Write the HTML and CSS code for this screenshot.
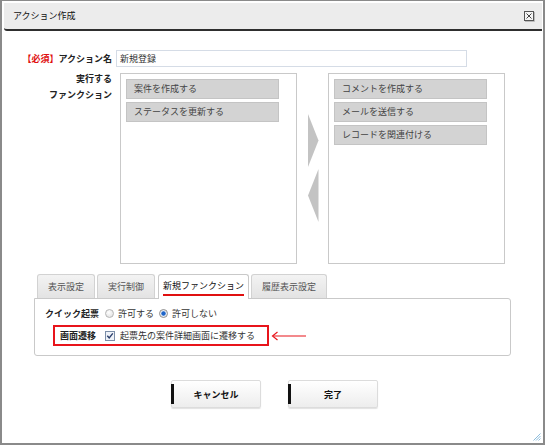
FILE: index.html
```html
<!DOCTYPE html>
<html lang="ja">
<head>
<meta charset="utf-8">
<title>アクション作成</title>
<link rel="stylesheet" href="styles.css">
</head>
<body>
<div class="win">
  <div class="header">
    <span class="title">アクション作成</span>
    <svg class="close" width="11" height="11" viewBox="0 0 11 11">
      <rect x="0.5" y="0.5" width="9" height="9" fill="#f4f4f4" stroke="#555"/>
      <path d="M2.5 2.5 L7.5 7.5 M7.5 2.5 L2.5 7.5" stroke="#444" stroke-width="1"/>
      <path d="M1 10.5 H10.5 V1" stroke="#bbb" fill="none"/>
    </svg>
  </div>
  <div class="main">
    <div class="row-name">
      <div class="label"><span class="req">【必須】</span>アクション名</div>
      <div class="input">新規登録</div>
    </div>
    <div class="row-func">
      <div class="label label-func">実行する<br>ファンクション</div>
      <div class="listbox">
        <div class="item">案件を作成する</div>
        <div class="item">ステータスを更新する</div>
      </div>
      <div class="arrows">
        <svg width="11" height="53" viewBox="0 0 11 53"><polygon points="0,0 10.5,26.5 0,53" fill="#c3c3c3"/></svg>
        <svg width="11" height="53" viewBox="0 0 11 53"><polygon points="10.5,0 0,26.5 10.5,53" fill="#c3c3c3"/></svg>
      </div>
      <div class="listbox">
        <div class="item">コメントを作成する</div>
        <div class="item">メールを送信する</div>
        <div class="item">レコードを関連付ける</div>
      </div>
    </div>
    <div class="tabs">
      <div class="tab">表示設定</div>
      <div class="tab">実行制御</div>
      <div class="tab tab-active"><span class="tab-mark">新規ファンクション</span></div>
      <div class="tab">履歴表示設定</div>
    </div>
    <div class="panel">
      <div class="opt-row">
        <span class="opt-label">クイック起票</span>
        <span class="radio"></span><span class="opt-text">許可する</span>
        <span class="radio radio-on"></span><span class="opt-text">許可しない</span>
      </div>
      <div class="hl-row">
        <div class="hl-box">
          <span class="opt-label">画面遷移</span>
          <svg class="check" width="10" height="10" viewBox="0 0 10 10">
            <rect x="0.5" y="0.5" width="9" height="9" fill="#eef2f8" stroke="#7b8ea8"/>
            <path d="M2.3 4.8 L4.2 7 L7.8 2.4" stroke="#2b3f6b" stroke-width="1.4" fill="none"/>
          </svg>
          <span class="hl-text">起票先の案件詳細画面に遷移する</span>
        </div>
        <svg class="pointer" width="36" height="10" viewBox="0 0 36 10">
          <path d="M2 5 H35" stroke="#e8141b" stroke-width="1.2"/>
          <path d="M6.5 1 L1.5 5 L6.5 9" stroke="#e8141b" stroke-width="1.2" fill="none"/>
        </svg>
      </div>
    </div>
    <div class="buttons">
      <div class="btn"><span class="btn-bar"></span><span class="btn-text">キャンセル</span></div>
      <div class="btn"><span class="btn-bar"></span><span class="btn-text">完了</span></div>
    </div>
  </div>
  <svg class="grip" width="8" height="8" viewBox="0 0 8 8">
    <path d="M7.5 0.5 L0.5 7.5 M7.5 3 L3 7.5 M7.5 5.5 L5.5 7.5" stroke="#7fb4d8" stroke-width="0.9"/>
  </svg>
</div>
</body>
</html>
```

FILE: styles.css
```css
html, body {
  margin: 0;
  padding: 0;
  background: #fff;
}
body {
  font-family: "Noto Sans CJK JP", "Noto Sans", sans-serif;
  font-size: 9px;
  color: #222;
}
.win {
  width: 545px;
  height: 445px;
  box-sizing: border-box;
  border: 2px solid #8a8a8a;
  border-top-width: 1px;
  background: #fff;
  display: flex;
  flex-direction: column;
  position: relative;
}
.header {
  margin: 2px 1px 0 2px;
  height: 26px;
  box-sizing: content-box;
  background: #ececec;
  border-bottom: 2px solid #2e2e2e;
  border-radius: 0 0 0 3px;
  display: flex;
  align-items: center;
  justify-content: space-between;
  padding: 0 7px 0 9px;
}
.title {
  font-size: 9px;
  color: #111;
  line-height: 12px;
}
.close {
  display: block;
}
.main {
  padding-top: 19px;
}
.row-name {
  display: flex;
  align-items: center;
}
.label {
  width: 110px;
  text-align: right;
  font-weight: bold;
  color: #222;
  line-height: 14px;
}
.req {
  color: #e01010;
}
.input {
  margin-left: 4px;
  width: 351px;
  height: 17px;
  box-sizing: border-box;
  border: 1px solid #d5dce6;
  padding-left: 3px;
  line-height: 15px;
  color: #333;
}
.row-func {
  display: flex;
  margin-top: 6px;
}
.label-func {
  line-height: 16px;
  margin-top: -2px;
}
.listbox {
  width: 177px;
  height: 191px;
  box-sizing: border-box;
  border: 1px solid #c9c9c9;
  padding: 5px;
  margin-left: 8px;
  display: flex;
  flex-direction: column;
  gap: 3px;
}
.listbox + .arrows + .listbox {
  margin-left: 0;
}
.item {
  width: 153px;
  height: 20px;
  box-sizing: border-box;
  border: 1px solid #c4c4c4;
  background: #d3d3d3;
  padding-left: 7px;
  line-height: 18px;
  color: #444;
}
.arrows {
  width: 31px;
  display: flex;
  flex-direction: column;
  align-items: center;
  padding-top: 41px;
  gap: 2px;
}
.arrows svg {
  display: block;
  margin-left: 1px;
}
.tabs {
  display: flex;
  gap: 2px;
  margin: 10px 0 0 35px;
  height: 24px;
}
.tab {
  height: 24px;
  box-sizing: border-box;
  padding: 0 10px;
  border: 1px solid #d2d2d2;
  border-bottom: none;
  border-radius: 3px 3px 0 0;
  background: linear-gradient(#f3f3f3, #e3e3e3);
  color: #555;
  line-height: 23px;
}
.tab-active {
  position: relative;
  z-index: 1;
  height: 25px;
  margin-left: 1px;
  padding: 0 4px 0 4px;
  background: #fff;
  border-color: #c9c9c9;
  color: #111;
}
.tab-mark {
  display: inline-block;
  line-height: 14px;
  border-bottom: 2px solid #e01010;
  padding-bottom: 1px;
  margin-top: 4px;
  vertical-align: top;
}
.panel {
  margin-left: 32px;
  width: 477px;
  height: 58px;
  box-sizing: border-box;
  border: 1px solid #c9c9c9;
  border-radius: 0 3px 3px 3px;
  padding: 7px 10px 0 10px;
}
.opt-row {
  display: flex;
  align-items: center;
  height: 14px;
}
.opt-label {
  font-weight: bold;
  color: #222;
}
.radio {
  width: 9px;
  height: 9px;
  box-sizing: border-box;
  border-radius: 50%;
  border: 1px solid #b5b5b5;
  background: radial-gradient(circle at 40% 35%, #fff, #dcdcdc);
  margin-left: 6px;
  margin-right: 4px;
}
.radio-on {
  margin-left: 5px;
  border-color: #8c8c8c;
  background: radial-gradient(circle, #1f64c8 0 1.8px, #bcd3f0 2.4px, #f2f2f2 3.2px);
}
.opt-text {
  color: #333;
}
.hl-row {
  display: flex;
  align-items: center;
  margin-top: 5px;
  margin-left: 8px;
}
.hl-box {
  width: 216px;
  height: 21px;
  box-sizing: border-box;
  border: 2px solid #e8141b;
  display: flex;
  align-items: center;
  padding-left: 5px;
}
.check {
  display: block;
  margin-left: 9px;
  margin-right: 5px;
}
.hl-text {
  color: #333;
}
.pointer {
  display: block;
  margin-left: 2px;
}
.buttons {
  display: flex;
  gap: 27px;
  margin-top: 24px;
  padding-left: 169px;
}
.btn {
  width: 90px;
  height: 28px;
  box-sizing: border-box;
  border: 1px solid #dcdcdc;
  border-radius: 2px;
  background: linear-gradient(#ffffff, #ededed);
  box-shadow: 0 1px 1px rgba(0, 0, 0, 0.12);
  display: flex;
  align-items: center;
}
.btn-bar {
  width: 3px;
  height: 20px;
  background: #111;
  margin-left: -1px;
}
.btn-text {
  flex: 1;
  text-align: center;
  font-weight: bold;
  color: #111;
  padding-right: 2px;
}
.grip {
  position: absolute;
  right: 2px;
  bottom: 2px;
  display: block;
}
```
